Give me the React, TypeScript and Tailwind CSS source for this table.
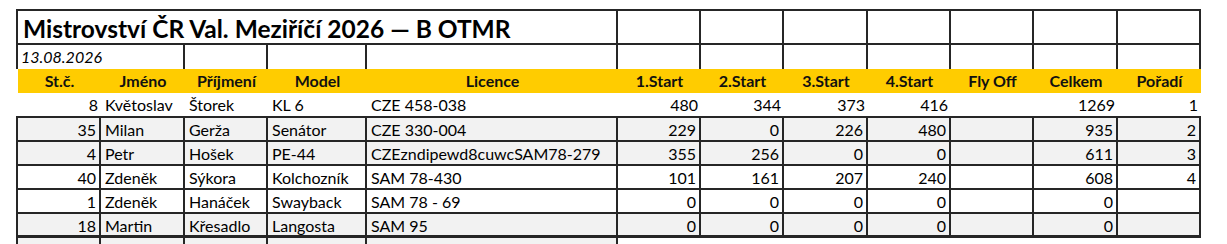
import React from "react";

// column template: first col includes the 2px left rule, every cell draws its own right rule
const grid =
  "grid grid-cols-[85px_84px_83px_99px_251px_83px_83px_84px_83px_83px_84px_83px]";
const line = "border-[#262626]";

type Entry = {
  no: string;
  name: string;
  surname: string;
  model: string;
  licence: string;
  starts: string[];
  flyOff: string;
  total: string;
  rank: string;
};

const entries: Entry[] = [
  { no: "8", name: "Květoslav", surname: "Štorek", model: "KL 6", licence: "CZE 458-038", starts: ["480", "344", "373", "416"], flyOff: "", total: "1269", rank: "1" },
  { no: "35", name: "Milan", surname: "Gerža", model: "Senátor", licence: "CZE 330-004", starts: ["229", "0", "226", "480"], flyOff: "", total: "935", rank: "2" },
  { no: "4", name: "Petr", surname: "Hošek", model: "PE-44", licence: "CZEzndipewd8cuwcSAM78-279", starts: ["355", "256", "0", "0"], flyOff: "", total: "611", rank: "3" },
  { no: "40", name: "Zdeněk", surname: "Sýkora", model: "Kolchozník", licence: "SAM 78-430", starts: ["101", "161", "207", "240"], flyOff: "", total: "608", rank: "4" },
  { no: "1", name: "Zdeněk", surname: "Hanáček", model: "Swayback", licence: "SAM 78 - 69", starts: ["0", "0", "0", "0"], flyOff: "", total: "0", rank: "" },
  { no: "18", name: "Martin", surname: "Křesadlo", model: "Langosta", licence: "SAM 95", starts: ["0", "0", "0", "0"], flyOff: "", total: "0", rank: "" },
];

const headers = ["St.č.", "Jméno", "Příjmení", "Model", "Licence", "1.Start", "2.Start", "3.Start", "4.Start", "Fly Off", "Celkem", "Pořadí"];

const DataRow = ({ e, ruled, className }: { e: Entry; ruled: boolean; className: string }) => {
  const r = ruled ? `border-r-2 ${line}` : "";
  const num = `flex items-center justify-end pr-[3px] whitespace-nowrap ${r}`;
  const txt = `flex items-center pl-[4px] whitespace-nowrap overflow-hidden ${r}`;
  return (
    <div className={`${grid} ${className}`}>
      <div className={`${num} ${ruled ? `border-l-2 ${line}` : ""}`}>{e.no}</div>
      <div className={txt}>{e.name}</div>
      <div className={txt}>{e.surname}</div>
      <div className={txt}>{e.model}</div>
      <div className={txt}>{e.licence}</div>
      {e.starts.map((s, i) => (
        <div key={i} className={num}>{s}</div>
      ))}
      <div className={num}>{e.flyOff}</div>
      <div className={num}>{e.total}</div>
      <div className={num}>{e.rank}</div>
    </div>
  );
};

export default function App() {
  const empty = Array.from({ length: 7 });
  return (
    <div className="w-[1227px] h-[244px] overflow-hidden bg-white text-black font-['Lato',_sans-serif] text-[16px]">
      <div className="pt-[9px] pl-[16px] w-[1201px]">
        {/* title */}
        <div className={`${grid} h-[36px] border-t-2 border-b-2 ${line}`}>
          <div className={`col-span-5 flex items-center pl-[5px] border-l-2 border-r-2 ${line} text-[24.5px] font-bold`}>
            Mistrovství ČR Val. Meziříčí 2026 — B OTMR
          </div>
          {empty.map((_, i) => (
            <div key={i} className={`border-r-2 ${line}`} />
          ))}
        </div>
        {/* date */}
        <div className={`${grid} h-[24px]`}>
          <div className={`col-span-2 flex items-center pl-[3px] border-l-2 border-r-2 ${line} italic`}>13.08.2026</div>
          <div className={`border-r-2 ${line}`} />
          <div className={`border-r-2 ${line}`} />
          <div className={`border-r-2 ${line}`} />
          {empty.map((_, i) => (
            <div key={i} className={`border-r-2 ${line}`} />
          ))}
        </div>
        {/* header */}
        <div className={`${grid} h-[24px] font-bold text-[#111]`}>
          {headers.map((h, i) => (
            <div
              key={h}
              className={`flex items-center justify-center bg-[#ffcc00] ${i === 0 ? "border-l-2 border-transparent bg-clip-padding" : ""}`}
            >
              {h}
            </div>
          ))}
        </div>
        <DataRow e={entries[0]} ruled={false} className="h-[23px]" />
        <DataRow e={entries[1]} ruled className={`h-[26px] border-t-2 border-b-2 ${line} bg-[#f2f2f2]`} />
        <DataRow e={entries[2]} ruled className={`h-[24px] border-b-2 ${line} bg-[#f2f2f2]`} />
        <DataRow e={entries[3]} ruled className={`h-[24px] border-b-2 ${line} bg-white`} />
        <DataRow e={entries[4]} ruled className={`h-[24px] border-b-2 ${line} bg-white`} />
        <DataRow e={entries[5]} ruled className={`h-[24px] border-b-[3px] ${line} bg-[#f2f2f2]`} />
        {/* next (cut off) row */}
        <div className={`${grid} h-[24px]`}>
          <div className={`bg-[#f2f2f2] border-l-2 border-r-2 ${line}`} />
          <div className={`bg-[#f2f2f2] border-r-2 ${line}`} />
          <div className={`bg-[#f2f2f2] border-r-2 ${line}`} />
          <div className={`bg-[#f2f2f2] border-r-2 ${line}`} />
          <div className={`bg-[#f2f2f2] border-r-2 ${line}`} />
        </div>
      </div>
    </div>
  );
}
